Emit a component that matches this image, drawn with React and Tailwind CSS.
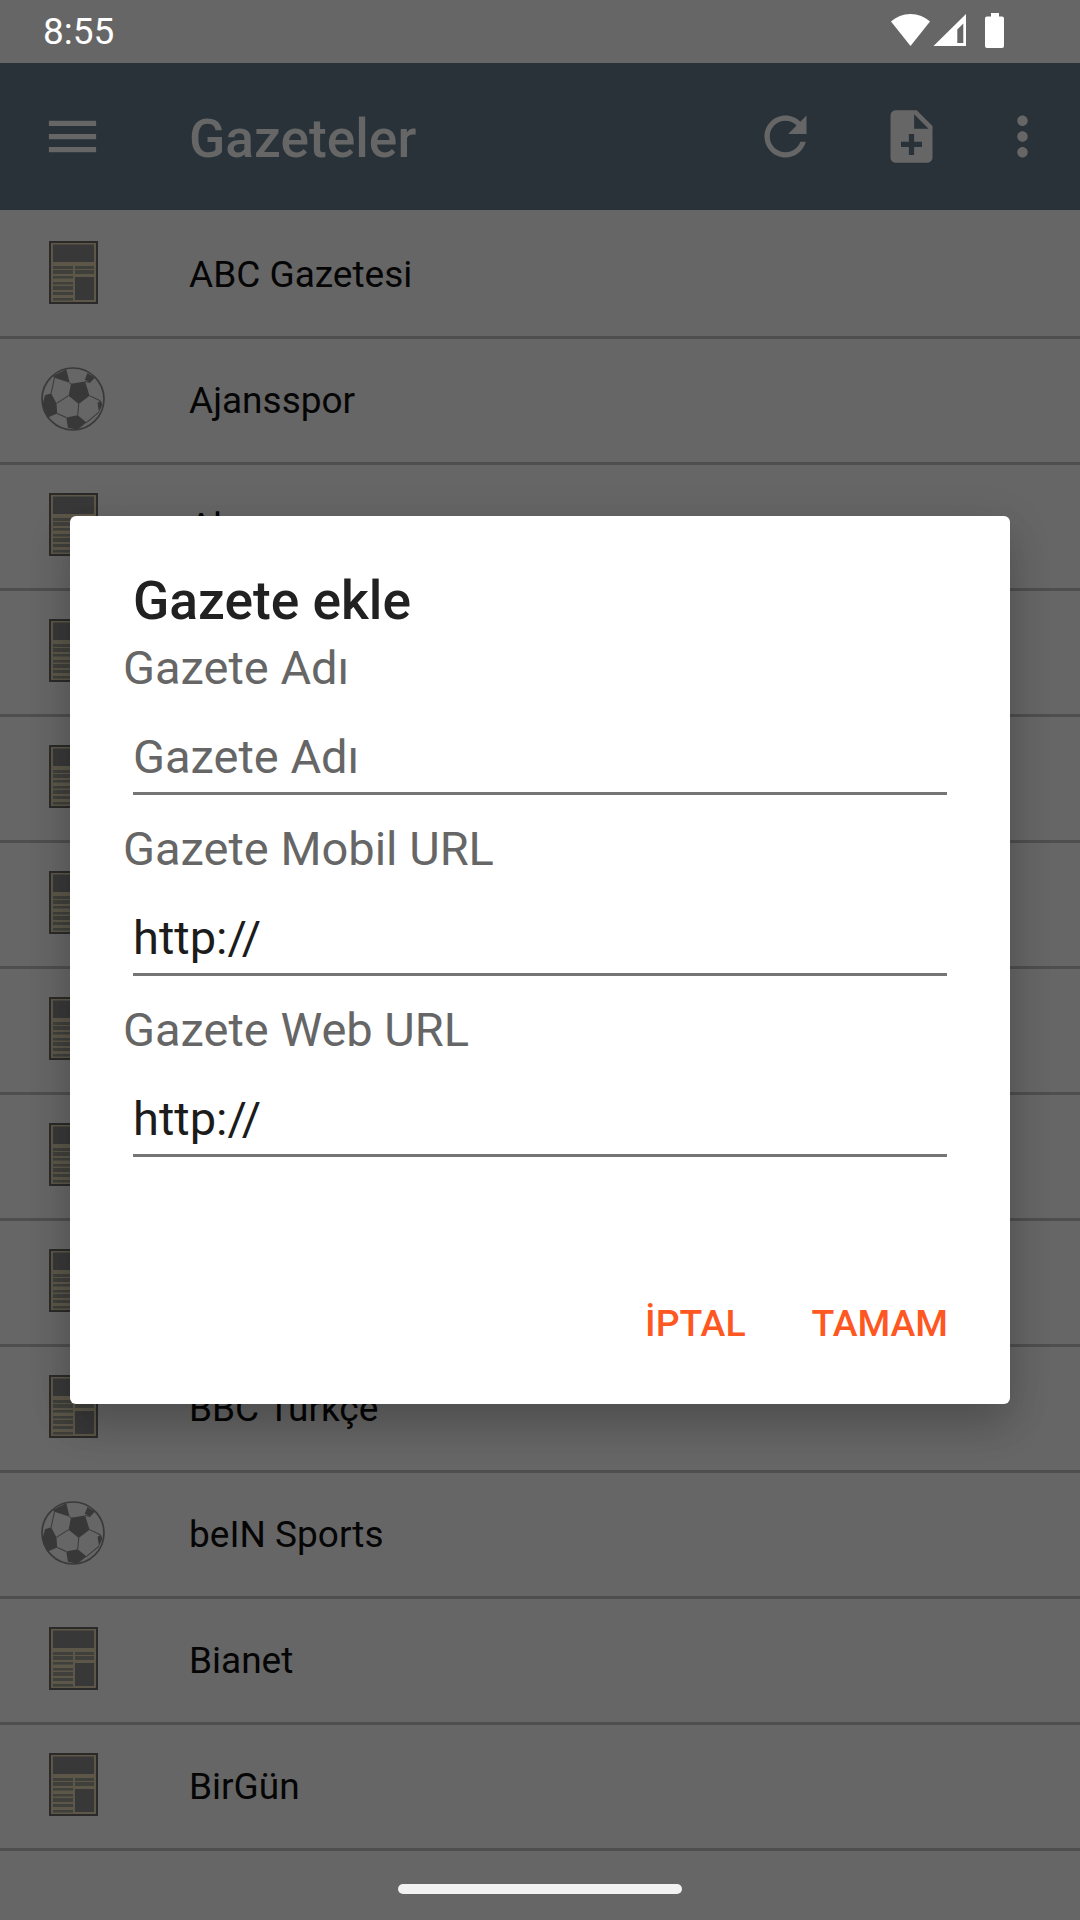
const rows = [
  { name: 'ABC Gazetesi', icon: 'paper' },
  { name: 'Ajansspor', icon: 'ball' },
  { name: 'Akşam', icon: 'paper' },
  { name: 'Anayurt', icon: 'paper' },
  { name: 'Aydınlık', icon: 'paper' },
  { name: 'Aydın Denge', icon: 'paper' },
  { name: 'Babıali', icon: 'paper' },
  { name: 'Bakış', icon: 'paper' },
  { name: 'Bağımsız', icon: 'paper' },
  { name: 'BBC Türkçe', icon: 'paper' },
  { name: 'beIN Sports', icon: 'ball' },
  { name: 'Bianet', icon: 'paper' },
  { name: 'BirGün', icon: 'paper' },
];

function PaperIcon() {
  const leftLines = [[25, 3], [29, 4], [35, 2.5], [41, 2.5], [45, 4], [51, 3], [57, 2.5]];
  const rightLines = [[25, 3], [29, 4]];
  return (
    <svg width="49" height="63" viewBox="0 0 49 63" className="block">
      <rect width="49" height="63" fill="#2b2a28" />
      <rect x="2" y="2" width="45" height="59" fill="#5c5749" />
      <rect x="4" y="3.5" width="41" height="17.5" fill="#383838" />
      {leftLines.map(([y, h]) => (
        <rect key={y} x="4" y={y} width="20" height={h} fill="#3f3f3c" />
      ))}
      {rightLines.map(([y, h]) => (
        <rect key={y} x="26" y={y} width="19" height={h} fill="#3f3f3c" />
      ))}
      <rect x="26" y="36" width="19" height="23" fill="#383838" />
    </svg>
  );
}

function BallIcon() {
  return (
    <svg width="64" height="64" viewBox="0 0 190 190" className="block">
      <circle cx="95" cy="95" r="92" fill="#666666" stroke="#3a3a3a" strokeWidth="5" />
      <path d="M89 50 131 43 144 85 112 110 82 85Z" fill="#383838" />
      <path d="M30 78 46 108 48 138 20 150 4 112 12 84Z" fill="#383838" />
      <path d="M75 150 109 143 135 165 108 186 80 180Z" fill="#383838" />
      <path d="M35 27 75 7 85 47 40 32Z" fill="#383838" />
      <path d="M138 18 160 32 146 46 130 38Z" fill="#383838" />
      <path d="M178 100 182 112 172 134 168 106Z" fill="#383838" />
      <path d="M30 78 40 32M82 85 46 108M112 110 109 143M144 85 176 100M48 138 75 150M135 165 172 134M85 47 89 50M131 43 146 46" stroke="#3a3a3a" strokeWidth="3" fill="none" />
    </svg>
  );
}

function ListRow({ name, icon }) {
  return (
    <div className="flex h-[126px] items-center border-b-[3px] border-[#4e4e4e] pb-1 box-border">
      <div className="flex w-[189px] shrink-0 justify-center pr-[43px]">
        {icon === 'ball' ? <BallIcon /> : <PaperIcon />}
      </div>
      <span className="mt-[5px] text-[37px] leading-[44px] text-[#050505]">{name}</span>
    </div>
  );
}

function MaterialIcon({ d, className }) {
  return (
    <svg width="63" height="63" viewBox="0 0 24 24" fill="currentColor" className={className}>
      <path d={d} />
    </svg>
  );
}

function Field({ label, value, placeholder }) {
  return (
    <div className="flex flex-col">
      <label className="pl-[53px] text-[47px] leading-[56px] text-[#666666]">{label}</label>
      <input
        readOnly
        value={value}
        placeholder={placeholder}
        className="mx-[63px] mt-[34px] h-[65px] border-b-[3px] border-[#757575] pb-[10px] text-[47px] leading-[52px] text-[#1c1c1c] outline-none placeholder:text-[#666666]"
      />
    </div>
  );
}

export default function App() {
  return (
    <div className="relative flex h-[1920px] w-[1080px] flex-col overflow-hidden bg-[#666666] font-['Roboto',sans-serif]">
      {/* status bar */}
      <div className="flex h-[63px] shrink-0 items-center justify-between pl-[43px] pr-[75px]">
        <span className="text-[37px] leading-[44px] text-white">8:55</span>
        <svg width="114" height="36" viewBox="0 0 114 36" className="mt-[-1px]">
          <path d="M19.5 33 0 8.5C5 4 12 1 19.5 1S34 4 39 8.5Z" fill="#fff" />
          <path d="M42.5 33 75 1V33Z" fill="#fff" />
          <path d="M66.3 16.5 72.3 10.5V30H66.3Z" fill="#666666" />
          <path d="M100 0h8v3.5h3a2 2 0 0 1 2 2V33a2 2 0 0 1-2 2H96a2 2 0 0 1-2-2V5.5a2 2 0 0 1 2-2h4Z" fill="#fff" />
        </svg>
      </div>

      {/* app bar */}
      <div className="relative flex h-[147px] shrink-0 items-center bg-[#283238] text-[#666666]">
        <MaterialIcon className="ml-[41px]" d="M3 18h18v-2H3v2zm0-5h18v-2H3v2zm0-7v2h18V6H3z" />
        <span className="ml-[85px] mt-[5px] text-[53.3px] font-medium leading-[62px]">Gazeteler</span>
        <div className="ml-auto flex items-center pr-[26px]">
          <MaterialIcon d="M17.65 6.35C16.2 4.9 14.21 4 12 4c-4.42 0-7.99 3.58-7.99 8s3.57 8 7.99 8c3.73 0 6.84-2.55 7.73-6h-2.08c-.82 2.33-3.04 4-5.65 4-3.31 0-6-2.69-6-6s2.69-6 6-6c1.66 0 3.14.69 4.22 1.78L13 11h7V4l-2.35 2.35z" />
          <MaterialIcon className="ml-[63px]" d="M14 2H6c-1.1 0-1.99.9-1.99 2L4 20c0 1.1.89 2 1.99 2H18c1.1 0 2-.9 2-2V8l-6-6zm2 14h-3v3h-2v-3H8v-2h3v-3h2v3h3v2zm-3-7V3.5L18.5 9H13z" />
          <MaterialIcon className="ml-[48px]" d="M12 8c1.1 0 2-.9 2-2s-.9-2-2-2-2 .9-2 2 .9 2 2 2zm0 2c-1.1 0-2 .9-2 2s.9 2 2 2 2-.9 2-2-.9-2-2-2zm0 6c-1.1 0-2 .9-2 2s.9 2 2 2 2-.9 2-2-.9-2-2-2z" />
        </div>
      </div>

      {/* list */}
      <div className="flex flex-col pt-[3px]">
        {rows.map((r) => (
          <ListRow key={r.name} name={r.name} icon={r.icon} />
        ))}
      </div>

      {/* gesture pill */}
      <div className="absolute bottom-[26px] left-[398px] h-[10px] w-[284px] rounded-full bg-[#f2f2f2]" />

      {/* dialog */}
      <div className="absolute inset-0 flex items-center justify-center">
        <div className="flex h-[888px] w-[940px] flex-col rounded-[6px] bg-white shadow-[0_24px_38px_rgba(0,0,0,0.14),0_9px_46px_rgba(0,0,0,0.12)]">
          <h2 className="ml-[63px] mt-[57px] text-[53.3px] font-medium leading-[56px] text-[#212121]">Gazete ekle</h2>
          <div className="mt-[11px] flex flex-col gap-[26px]">
            <Field label="Gazete Adı" value="" placeholder="Gazete Adı" />
            <Field label="Gazete Mobil URL" value="http://" />
            <Field label="Gazete Web URL" value="http://" />
          </div>
          <div className="mt-auto flex justify-end gap-[66px] pb-[59px] pr-[62px] text-[37.4px] font-medium leading-[44px] text-[#ff5722]">
            <span>İPTAL</span>
            <span>TAMAM</span>
          </div>
        </div>
      </div>
    </div>
  );
}
